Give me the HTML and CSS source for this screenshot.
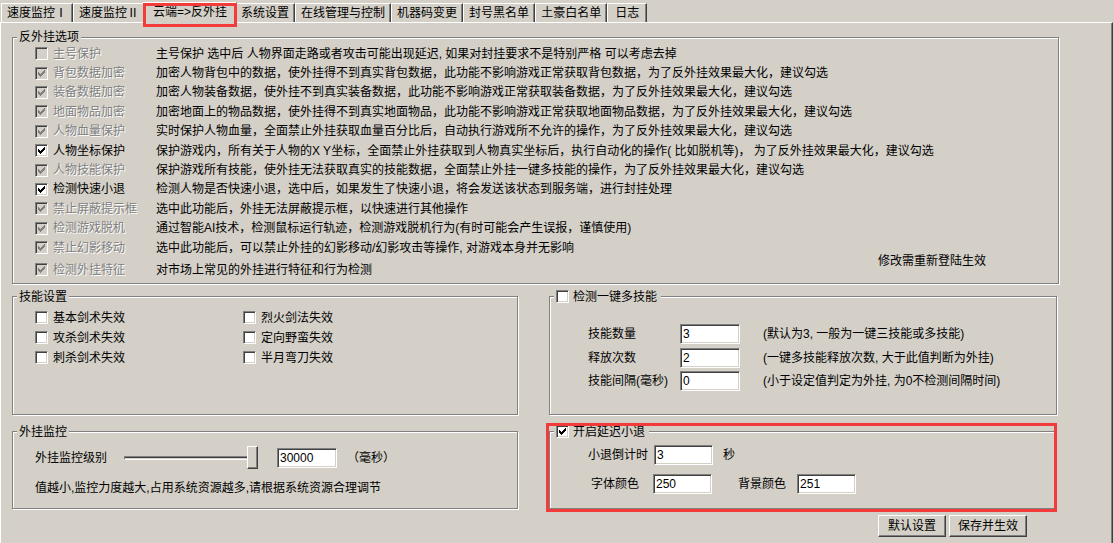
FILE: index.html
```html
<!DOCTYPE html>
<html lang="zh-CN">
<head>
    <meta charset="UTF-8">
    <title>云端=>反外挂</title>
    <link rel="stylesheet" href="styles.css">
</head>
<body>
    <div class="tabs">
        <div class="tab">速度监控Ⅰ</div>
        <div class="tab">速度监控Ⅱ</div>
        <div class="tab active">云端=>反外挂</div>
        <div class="tab">系统设置</div>
        <div class="tab">在线管理与控制</div>
        <div class="tab">机器码变更</div>
        <div class="tab">封号黑名单</div>
        <div class="tab">土豪白名单</div>
        <div class="tab last">日志</div>
    </div>

    <div class="page">
        <fieldset class="group g-main">
            <legend>反外挂选项</legend>
            <div class="opt">
                <span class="chk off"><span class="box"></span>主号保护</span>
                <span class="desc">主号保护 选中后 人物界面走路或者攻击可能出现延迟, 如果对封挂要求不是特别严格 可以考虑去掉</span>
            </div>
            <div class="opt">
                <span class="chk off"><span class="box"><svg width="7" height="7" viewBox="0 0 7 7"><path d="M0 2h1v1h1v1h1V3h1V2h1V1h1V0h1v3H6v1H5v1H4v1H3v1H2V6H1V5H0z"/></svg></span>背包数据加密</span>
                <span class="desc">加密人物背包中的数据，使外挂得不到真实背包数据，此功能不影响游戏正常获取背包数据，为了反外挂效果最大化，建议勾选</span>
            </div>
            <div class="opt">
                <span class="chk off"><span class="box"><svg width="7" height="7" viewBox="0 0 7 7"><path d="M0 2h1v1h1v1h1V3h1V2h1V1h1V0h1v3H6v1H5v1H4v1H3v1H2V6H1V5H0z"/></svg></span>装备数据加密</span>
                <span class="desc">加密人物装备数据，使外挂不到真实装备数据，此功能不影响游戏正常获取装备数据，为了反外挂效果最大化，建议勾选</span>
            </div>
            <div class="opt">
                <span class="chk off"><span class="box"><svg width="7" height="7" viewBox="0 0 7 7"><path d="M0 2h1v1h1v1h1V3h1V2h1V1h1V0h1v3H6v1H5v1H4v1H3v1H2V6H1V5H0z"/></svg></span>地面物品加密</span>
                <span class="desc">加密地面上的物品数据，使外挂得不到真实地面物品，此功能不影响游戏正常获取地面物品数据，为了反外挂效果最大化，建议勾选</span>
            </div>
            <div class="opt">
                <span class="chk off"><span class="box"><svg width="7" height="7" viewBox="0 0 7 7"><path d="M0 2h1v1h1v1h1V3h1V2h1V1h1V0h1v3H6v1H5v1H4v1H3v1H2V6H1V5H0z"/></svg></span>人物血量保护</span>
                <span class="desc">实时保护人物血量，全面禁止外挂获取血量百分比后，自动执行游戏所不允许的操作，为了反外挂效果最大化，建议勾选</span>
            </div>
            <div class="opt">
                <span class="chk"><span class="box"><svg width="7" height="7" viewBox="0 0 7 7"><path d="M0 2h1v1h1v1h1V3h1V2h1V1h1V0h1v3H6v1H5v1H4v1H3v1H2V6H1V5H0z"/></svg></span>人物坐标保护</span>
                <span class="desc">保护游戏内，所有关于人物的X Y坐标，全面禁止外挂获取到人物真实坐标后，执行自动化的操作( 比如脱机等)， 为了反外挂效果最大化，建议勾选</span>
            </div>
            <div class="opt">
                <span class="chk off"><span class="box"><svg width="7" height="7" viewBox="0 0 7 7"><path d="M0 2h1v1h1v1h1V3h1V2h1V1h1V0h1v3H6v1H5v1H4v1H3v1H2V6H1V5H0z"/></svg></span>人物技能保护</span>
                <span class="desc">保护游戏所有技能，使外挂无法获取真实的技能数据，全面禁止外挂一键多技能的操作，为了反外挂效果最大化，建议勾选</span>
            </div>
            <div class="opt">
                <span class="chk"><span class="box"><svg width="7" height="7" viewBox="0 0 7 7"><path d="M0 2h1v1h1v1h1V3h1V2h1V1h1V0h1v3H6v1H5v1H4v1H3v1H2V6H1V5H0z"/></svg></span>检测快速小退</span>
                <span class="desc">检测人物是否快速小退，选中后，如果发生了快速小退，将会发送该状态到服务端，进行封挂处理</span>
            </div>
            <div class="opt">
                <span class="chk off"><span class="box"><svg width="7" height="7" viewBox="0 0 7 7"><path d="M0 2h1v1h1v1h1V3h1V2h1V1h1V0h1v3H6v1H5v1H4v1H3v1H2V6H1V5H0z"/></svg></span>禁止屏蔽提示框</span>
                <span class="desc">选中此功能后，外挂无法屏蔽提示框，以快速进行其他操作</span>
            </div>
            <div class="opt">
                <span class="chk off"><span class="box"><svg width="7" height="7" viewBox="0 0 7 7"><path d="M0 2h1v1h1v1h1V3h1V2h1V1h1V0h1v3H6v1H5v1H4v1H3v1H2V6H1V5H0z"/></svg></span>检测游戏脱机</span>
                <span class="desc">通过智能AI技术，检测鼠标运行轨迹，检测游戏脱机行为(有时可能会产生误报，谨慎使用)</span>
            </div>
            <div class="opt">
                <span class="chk off"><span class="box"><svg width="7" height="7" viewBox="0 0 7 7"><path d="M0 2h1v1h1v1h1V3h1V2h1V1h1V0h1v3H6v1H5v1H4v1H3v1H2V6H1V5H0z"/></svg></span>禁止幻影移动</span>
                <span class="desc">选中此功能后，可以禁止外挂的幻影移动/幻影攻击等操作, 对游戏本身并无影响</span>
            </div>
            <div class="opt last">
                <span class="chk off"><span class="box"><svg width="7" height="7" viewBox="0 0 7 7"><path d="M0 2h1v1h1v1h1V3h1V2h1V1h1V0h1v3H6v1H5v1H4v1H3v1H2V6H1V5H0z"/></svg></span>检测外挂特征</span>
                <span class="desc">对市场上常见的外挂进行特征和行为检测</span>
                <span class="note">修改需重新登陆生效</span>
            </div>
        </fieldset>

        <div class="pair">
            <fieldset class="group g-skill">
                <legend>技能设置</legend>
                <div class="skills">
                    <span class="chk"><span class="box"></span>基本剑术失效</span>
                    <span class="chk"><span class="box"></span>烈火剑法失效</span>
                    <span class="chk"><span class="box"></span>攻杀剑术失效</span>
                    <span class="chk"><span class="box"></span>定向野蛮失效</span>
                    <span class="chk"><span class="box"></span>刺杀剑术失效</span>
                    <span class="chk"><span class="box"></span>半月弯刀失效</span>
                </div>
            </fieldset>

            <fieldset class="group g-multi">
                <legend><span class="chk"><span class="box"></span>检测一键多技能</span></legend>
                <div class="inner">
                    <div class="kv">
                        <span class="key">技能数量</span>
                        <input class="field" type="text" value="3">
                        <span class="hint">(默认为3, 一般为一键三技能或多技能)</span>
                    </div>
                    <div class="kv">
                        <span class="key">释放次数</span>
                        <input class="field" type="text" value="2">
                        <span class="hint">(一键多技能释放次数, 大于此值判断为外挂)</span>
                    </div>
                    <div class="kv">
                        <span class="key">技能间隔(毫秒)</span>
                        <input class="field" type="text" value="0">
                        <span class="hint">(小于设定值判定为外挂, 为0不检测间隔时间)</span>
                    </div>
                </div>
            </fieldset>
        </div>

        <div class="pair low">
            <fieldset class="group g-watch">
                <legend>外挂监控</legend>
                <div class="inner">
                    <div class="watch-row">
                        <span class="watch-label">外挂监控级别</span>
                        <div class="slider">
                            <div class="track"></div>
                            <div class="thumb"></div>
                        </div>
                        <input class="field" type="text" value="30000">
                        <span class="unit">（毫秒）</span>
                    </div>
                    <p class="watch-note">值越小,监控力度越大,占用系统资源越多,请根据系统资源合理调节</p>
                </div>
            </fieldset>

            <div class="marked">
                <fieldset class="group g-delay">
                    <legend><span class="chk"><span class="box"><svg width="7" height="7" viewBox="0 0 7 7"><path d="M0 2h1v1h1v1h1V3h1V2h1V1h1V0h1v3H6v1H5v1H4v1H3v1H2V6H1V5H0z"/></svg></span>开启延迟小退</span></legend>
                    <div class="inner">
                        <div class="delay-row">
                            <span>小退倒计时</span>
                            <input class="field narrow" type="text" value="3">
                            <span class="sec">秒</span>
                        </div>
                        <div class="delay-row second">
                            <span>字体颜色</span>
                            <input class="field narrow" type="text" value="250">
                            <span class="bg-label">背景颜色</span>
                            <input class="field narrow" type="text" value="251">
                        </div>
                    </div>
                </fieldset>
            </div>
        </div>

        <div class="actions">
            <button class="btn">默认设置</button>
            <button class="btn wide">保存并生效</button>
        </div>
    </div>
</body>
</html>
```

FILE: styles.css
```css
* { box-sizing: border-box; }
body { margin: 0; background: #d4d0c8; color: #000; font: 12px/14px "Liberation Sans", "Noto Sans CJK SC", sans-serif; overflow: hidden; }

/* tab strip */
.tabs { display: flex; align-items: flex-end; height: 22px; padding-left: 1px; }
.tab { height: 19px; line-height: 18px; padding: 0 5px; white-space: nowrap; border-top: 1px solid #fff; border-left: 1px solid #fff; border-right: 1px solid #404040; box-shadow: inset -1px 0 #808080; }
.tab.active { position: relative; z-index: 1; height: 21px; line-height: 19px; margin: 0 -2px -1px; padding: 0 9px; background: #d4d0c8; }
.tab.active::after { content: ""; position: absolute; top: 0; left: -1px; right: -1px; bottom: -4px; border: 3px solid #f23b3b; }
.tab.last { padding: 0 7px; }

.page { width: 1113px; height: 521px; padding: 7px 0 0 11px; border-top: 1px solid #fff; border-left: 1px solid #fff; border-right: 1px solid #404040; box-shadow: inset -1px 0 #808080; }

/* etched group box */
.group { margin: 0; padding: 0; min-width: 0; border: 1px solid #808080; box-shadow: 1px 1px 0 #fff, inset 1px 1px 0 #fff; }
.group legend { margin-left: 4px; padding: 0 2px; line-height: 14px; background: #d4d0c8; }

/* checkbox */
.chk { display: flex; align-items: center; gap: 5px; white-space: nowrap; }
.box { flex: none; width: 13px; height: 13px; display: flex; align-items: center; justify-content: center; background: #fff; border: 1px solid; border-color: #808080 #fff #fff #808080; box-shadow: inset 1px 1px #404040, inset -1px -1px #d4d0c8; }
.box svg { display: block; fill: #000; }
.chk.off { color: #808080; text-shadow: 1px 1px 0 #fff; }
.chk.off .box { background: #d4d0c8; }
.chk.off .box svg { fill: #808080; }

/* main options */
.g-main { width: 1047px; padding-bottom: 3px; }
.opt { display: flex; align-items: center; height: 19.4px; padding-left: 22px; white-space: nowrap; }
.opt .chk { width: 121px; }
.opt.last { margin-top: 3px; }
.note { align-self: flex-start; margin: -6px 72px 0 auto; }

.pair { display: flex; gap: 31px; margin-top: 6px; }
.pair.low { margin-top: 10px; }

.g-skill { width: 506px; height: 125px; }
.skills { display: grid; grid-template-columns: 208px 208px; grid-auto-rows: 20px; align-items: center; padding: 4px 0 0 22px; }

.g-multi { width: 508px; height: 125px; }
.g-multi .inner { padding: 19px 0 0 38px; }
.g-multi legend, .g-delay legend { padding: 0 4px 0 2px; }
.g-multi legend .chk, .g-delay legend .chk { gap: 4px; }
.kv { display: flex; align-items: center; height: 23.5px; white-space: nowrap; }
.key { width: 92px; }
.hint { margin-left: 23px; }

/* sunken text field */
.field { width: 60px; height: 20px; margin: 0; padding: 0 2px; font: inherit; line-height: 18px; color: #000; background: #fff; border: 1px solid; border-color: #808080 #fff #fff #808080; box-shadow: inset 1px 1px #404040, inset -1px -1px #d4d0c8; outline: none; }
.field.narrow { width: 59px; }

.g-watch { width: 506px; height: 84px; }
.g-watch .inner { padding: 7px 0 0 22px; }
.watch-row { display: flex; align-items: center; height: 24px; }
.watch-label { width: 89px; }
.slider { display: flex; align-items: center; width: 134px; height: 24px; margin-right: 19px; }
.track { flex: 1; height: 4px; border: 1px solid; border-color: #808080 #fff #fff #808080; box-shadow: inset 0 1px #404040; }
.thumb { width: 11px; height: 23px; margin-left: -3px; background: #d4d0c8; border: 1px solid; border-color: #fff #404040 #404040 #fff; box-shadow: inset -1px -1px #808080; }
.unit { margin-left: 10px; }
.watch-note { margin: 11px 0 0; }

.marked { position: relative; }
.marked::after { content: ""; position: absolute; top: -2px; left: -3px; right: -1px; bottom: -3px; border: 3px solid #f23b3b; }
.g-delay { width: 507px; height: 84px; }
.g-delay .inner { padding: 6px 0 0 38px; }
.delay-row { display: flex; align-items: center; height: 20px; gap: 6px; white-space: nowrap; }
.delay-row .sec { margin-left: 4px; }
.delay-row.second { margin-top: 9px; padding-left: 3px; gap: 14px; }
.delay-row .bg-label { margin-left: 12px; margin-right: -3px; }

.actions { display: flex; gap: 3px; margin-top: 6px; padding-left: 866px; }
.btn { width: 68px; height: 22px; padding: 0; font: inherit; color: #000; background: #d4d0c8; border: 1px solid; border-color: #fff #404040 #404040 #fff; box-shadow: inset -1px -1px #808080; }
.btn.wide { width: 78px; }
```
